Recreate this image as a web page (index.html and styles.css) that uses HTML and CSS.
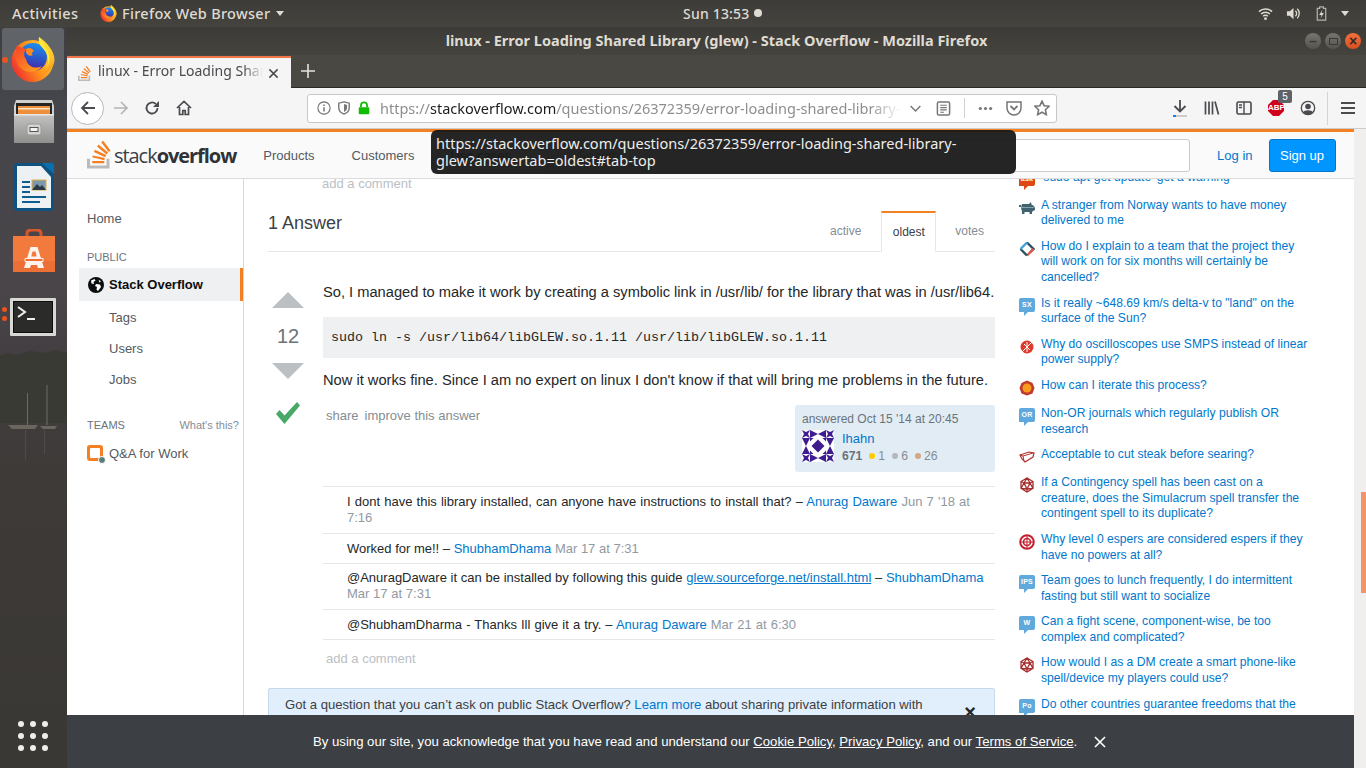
FILE: index.html
```html
<!DOCTYPE html>
<html lang="en">
<head>
<meta charset="utf-8">
<title>linux - Error Loading Shared Library (glew) - Stack Overflow</title>
<link rel="stylesheet" href="styles.css">
</head>
<body>
<svg class="defs" width="0" height="0" aria-hidden="true">
  <defs>
    <linearGradient id="ffBody" x1="0.95" y1="0.25" x2="0.05" y2="0.75">
      <stop offset="0" stop-color="#ffd22e"/><stop offset="0.5" stop-color="#ff8f1c"/><stop offset="1" stop-color="#f0302f"/>
    </linearGradient>
    <linearGradient id="ffGlobe" x1="0.6" y1="0" x2="0.45" y2="1">
      <stop offset="0" stop-color="#1b8ff0"/><stop offset="0.55" stop-color="#2b55c8"/><stop offset="1" stop-color="#4a1fa0"/>
    </linearGradient>
    <linearGradient id="ffTail" x1="0" y1="0" x2="0.8" y2="1">
      <stop offset="0" stop-color="#f5402c"/><stop offset="1" stop-color="#ff9d1c"/>
    </linearGradient>
    <linearGradient id="ffHorn" x1="0.4" y1="0" x2="0.5" y2="1">
      <stop offset="0" stop-color="#ffe838"/><stop offset="0.6" stop-color="#ffc02a"/><stop offset="1" stop-color="#ff8f1c"/>
    </linearGradient>
    <linearGradient id="metal" x1="0" y1="0" x2="0" y2="1">
      <stop offset="0" stop-color="#c4c4c2"/><stop offset="1" stop-color="#8f8f8d"/>
    </linearGradient>
    <symbol id="firefox" viewBox="0 0 44 45">
      <circle cx="21.500" cy="24" r="21" fill="url(#ffBody)"/>
      <circle cx="22" cy="20" r="14" fill="url(#ffGlobe)"/>
      <path d="M28 0c-1 7 3 10 7 14 5 5 6 14 1 19-3 3-8 5-12 5 8 0 19-4 19.500-15C43.500 13 35 5 28 0z" fill="url(#ffHorn)"/>
      <path d="M28 0c-1 7 3 10 6 14 4 6 4 13 0 18 4-3 5-9 4-14-1-6-6-12-10-18z" fill="#ffe838"/>
      <path d="M6 8c3 3 6 3 9 4-3 4-2 8 0 10 1 7 9 11 16 7-4 6-13 8-20 3C4 27 3 16 6 8z" fill="url(#ffTail)"/>
      <path d="M15 12c3-2 6-1 8 2-2 1-3 3-1 4-3 2-6 0-7-3z" fill="#ff8a1f"/>
    </symbol>
    <symbol id="so" viewBox="0 8 32 37">
      <path d="M26 41v-9h4v13H0V32h4v9h22z" fill="#bcbbbb"/>
      <path d="M23 34l.8-3-16.100-3.300L7 30.300 23 34zM9.200 23.200l15 7 1.400-3-15-7-1.400 3zm4.200-7.400L26 26.400l2.100-2.500-12.700-10.600-2 2.500zM21.500 8l-2.600 2 9.900 13.300 2.600-2L21.500 8zM7 38h16v-3H7v3z" fill="#f48024"/>
    </symbol>
    <symbol id="d20" viewBox="0 0 16 16">
      <path d="M8 1l6 3.500v7L8 15l-6-3.500v-7zM8 1L5 6h6zM5 6l-3 5.500M11 6l3 5.500M5 6l3 6 3-6M2 11.500L8 12l6-.5M8 12v3M2 4.500L5 6M14 4.500L11 6" fill="none" stroke="#a52a2a" stroke-width="1.300"/>
    </symbol>
    <g id="quilt">
      <path d="M0 0l4 2 4-2-2 4 2 4-4-2-4 2 2-4zM8 0l8 4-8 4zM0 8h8l-4 8zM16 9.500v6.500H9.500zM8 8h3.500L8 11.500z" fill="#3f1d8f"/>
    </g>
  </defs>
</svg>

<header class="topbar">
  <div class="topbar-left">
    <span class="activities">Activities</span>
    <svg class="top-ff"><use href="#firefox"/></svg>
    <span class="app-name">Firefox Web Browser</span>
    <span class="caret"></span>
  </div>
  <div class="clock">Sun 13:53<span class="clock-dot"></span></div>
  <div class="tray">
    <svg class="tray-icon" viewBox="0 0 16 16"><path d="M1 6a10 10 0 0 1 14 0M3.300 8.500a6.800 6.800 0 0 1 9.400 0M5.500 11a3.500 3.500 0 0 1 5 0" fill="none" stroke="#dfdbd2" stroke-width="1.500"/><circle cx="8" cy="13.500" r="1.500" fill="#dfdbd2"/></svg>
    <svg class="tray-icon" viewBox="0 0 16 16"><path d="M1 5.500h3L8 2v12L4 10.500H1z" fill="#dfdbd2"/><path d="M10 5a4 4 0 0 1 0 6M12 3a7 7 0 0 1 0 10" fill="none" stroke="#dfdbd2" stroke-width="1.400"/></svg>
    <svg class="tray-icon" viewBox="0 0 16 16"><path d="M6 1h4v1.500h2.500V15h-9V2.500H6z" fill="none" stroke="#b5b2ac" stroke-width="1.300"/><path d="M9 4L5.500 9.500H8L7 13l3.500-5.500H8z" fill="#dfdbd2"/></svg>
    <span class="caret caret-tray"></span>
  </div>
</header>

<div class="desk">
  <nav class="dock">
    <svg class="wallpaper" viewBox="0 0 67 741" preserveAspectRatio="none" aria-hidden="true">
      <path d="M0 329l8-3 10 2 12-4 14 2 12-3 11 3v70H0z" fill="#383a33"/>
      <path d="M27 366h1v32h-1zM46.500 358h1v40h-1z" fill="#6e6a64"/>
      <path d="M8 398h30l-3 4H12zM40 399h17l-2 3H43z" fill="#6a665f"/>
      <path d="M25 403h1v30h-1zM44 403h1v24h-1z" fill="#4f4c47"/>
    </svg>
    <div class="dock-active">
      <span class="run-dot run-ff"></span>
      <svg class="dock-ff"><use href="#firefox"/></svg>
    </div>
    <svg class="dock-files" viewBox="0 0 42 44">
      <path d="M3 0h36l2 6v37H1V6z" fill="#d0d0ce"/>
      <path d="M3 3h36v11H3z" fill="#262523"/>
      <path d="M5 6h32v8H5z" fill="#ee8f3b"/>
      <path d="M5 8h32v1.500H5z" fill="#f7e5c9"/>
      <path d="M1 14h40v29H1z" fill="url(#metal)"/>
      <path d="M1 14h40v1.500H1z" fill="#e8e8e6"/>
      <rect x="14" y="24" width="14" height="11" rx="2" fill="#d4d4d2" stroke="#999"/>
      <rect x="17" y="27.500" width="8" height="4" fill="#f4f4f2" stroke="#555"/>
    </svg>
    <svg class="dock-writer" viewBox="0 0 40 48">
      <rect x="0" y="0" width="40" height="48" rx="3" fill="#10527f"/>
      <path d="M3 3h24l10 11v31H3z" fill="#eef1f4"/>
      <path d="M28 0h10a2 2 0 0 1 2 2v9z" fill="#0a6fae"/>
      <path d="M8 18h8v2H8zM8 23h8v2H8zM8 28h8v2H8zM8 33h24v2H8zM8 38h18v2H8z" fill="#0f5c8f"/>
      <rect x="18" y="17" width="14" height="10" fill="#7d97ad" stroke="#e0b04a"/>
      <path d="M18 27l5-6 3 3 2-2 4 5z" fill="#2c3a44"/>
    </svg>
    <svg class="dock-bag" viewBox="0 0 42 43">
      <path d="M14 9V5q0-4 4-4h6q4 0 4 4v4" fill="none" stroke="#d8572a" stroke-width="3"/>
      <path d="M0 7h42v36H0z" fill="#f27a3c"/>
      <path d="M0 32h42v11H0z" fill="#ec7036"/>
      <path d="M17.500 18h7l6.500 21h-6l-1-3h-6l-1 3h-6z" fill="#fdf3ec"/>
      <path d="M12 29.500h18v3H12z" fill="#ed6d33" stroke="#fdf3ec"/>
      <path d="M19.500 22.500h3l1.200 5h-5.400z" fill="#f27a3c"/>
    </svg>
    <div class="dock-term-row">
      <span class="term-dots"><span class="run-dot"></span><span class="run-dot"></span></span>
      <svg class="dock-term" viewBox="0 0 46 38">
        <rect width="46" height="38" rx="1" fill="#d8d8d5"/>
        <rect x="3.500" y="3.500" width="39" height="31" fill="#2b2b2a" stroke="#0e0e0e"/>
        <path d="M8 9l7 5-7 5" fill="none" stroke="#f0f0ee" stroke-width="2"/>
        <path d="M17 20h8v2h-8z" fill="#f0f0ee"/>
      </svg>
    </div>
    <div class="apps-grid">
      <span></span><span></span><span></span><span></span><span></span><span></span><span></span><span></span><span></span>
    </div>
  </nav>

  <div class="window">
    <div class="titlebar">
      <div class="title">linux - Error Loading Shared Library (glew) - Stack Overflow - Mozilla Firefox</div>
      <div class="win-controls">
        <span class="win-btn">–</span>
        <span class="win-btn"><span class="win-max"></span></span>
        <span class="win-btn win-close">×</span>
      </div>
    </div>
    <div class="tabstrip">
      <div class="tab">
        <svg class="tab-fav"><use href="#so"/></svg>
        <span class="tab-title">linux - Error Loading Shar</span>
        <svg class="tab-x" viewBox="0 0 12 12"><path d="M1.500 1.500l9 9M10.500 1.500l-9 9" stroke="#4a4a4f" stroke-width="1.600"/></svg>
      </div>
      <svg class="newtab" viewBox="0 0 14 14"><path d="M7 0v14M0 7h14" stroke="#e4e2de" stroke-width="1.600"/></svg>
    </div>
    <div class="toolbar">
      <span class="back-btn">
        <svg viewBox="0 0 16 16"><path d="M15 8H2M8 2L2 8l6 6" fill="none" stroke="#4a4a4f" stroke-width="1.800"/></svg>
      </span>
      <svg class="tool-icon fwd" viewBox="0 0 16 16"><path d="M1 8h13M8 2l6 6-6 6" fill="none" stroke="#b3b3b3" stroke-width="1.600"/></svg>
      <svg class="tool-icon reload" viewBox="0 0 16 16"><path d="M13.500 8a5.500 5.500 0 1 1-1.700-4" fill="none" stroke="#4a4a4f" stroke-width="1.800"/><path d="M15 1v6H9z" fill="#4a4a4f"/></svg>
      <svg class="tool-icon home" viewBox="0 0 16 16"><path d="M1 8l7-6.500L15 8M3.500 7v7.500h3.300v-4h2.400v4h3.300V7" fill="none" stroke="#4a4a4f" stroke-width="1.700"/></svg>
      <div class="urlbar">
        <svg class="url-icon" viewBox="0 0 16 16"><circle cx="8" cy="8" r="7" fill="none" stroke="#6b6b6e" stroke-width="1.200"/><path d="M7.200 7h1.600v5H7.200zM7.200 4h1.600v1.600H7.200z" fill="#6b6b6e"/></svg>
        <svg class="url-icon" viewBox="0 0 16 16"><path d="M8 1l6 1.500v5c0 4-3 6.500-6 7.500-3-1-6-3.500-6-7.500v-5z" fill="none" stroke="#77777a" stroke-width="1.600"/><path d="M8 3.500l3.500 1v3.500c0 2-1.500 3.600-3.500 4.500z" fill="#77777a"/></svg>
        <svg class="url-icon" viewBox="0 0 16 16"><path d="M4.500 7V5a3.500 3.500 0 0 1 7 0v2" fill="none" stroke="#12bc00" stroke-width="2"/><rect x="2" y="7" width="12" height="8" rx="1" fill="#12bc00"/></svg>
        <div class="url-text"><span class="url-dim">https://</span>stackoverflow.com<span class="url-dim">/questions/26372359/error-loading-shared-library-</span></div>
        <svg class="url-end chev" viewBox="0 0 16 16"><path d="M2 5l6 6 6-6" fill="none" stroke="#77777a" stroke-width="1.800"/></svg>
        <svg class="url-end reader" viewBox="0 0 16 16"><rect x="1.500" y="1" width="13" height="14" rx="1.500" fill="none" stroke="#77777a" stroke-width="1.600"/><path d="M4.500 4.500h7M4.500 7h7M4.500 9.500h7M4.500 12h4" stroke="#77777a" stroke-width="1.200"/></svg>
        <span class="url-sep"></span>
        <svg class="url-end more" viewBox="0 0 16 16"><circle cx="2.500" cy="8" r="1.700" fill="#77777a"/><circle cx="8" cy="8" r="1.700" fill="#77777a"/><circle cx="13.500" cy="8" r="1.700" fill="#77777a"/></svg>
        <svg class="url-end pocket" viewBox="0 0 16 16"><path d="M1 2h14v6a7 7 0 0 1-14 0z" fill="none" stroke="#77777a" stroke-width="1.500"/><path d="M4.500 6L8 9.500 11.500 6" fill="none" stroke="#77777a" stroke-width="1.800"/></svg>
        <svg class="url-end star" viewBox="0 0 16 16"><path d="M8 1.200l2.100 4.500 4.900.6-3.600 3.400.9 4.900L8 12.200l-4.300 2.400.9-4.900L1 6.300l4.900-.6z" fill="none" stroke="#77777a" stroke-width="1.600"/></svg>
      </div>
      <svg class="tool-icon dl" viewBox="0 0 16 18"><path d="M8 1v11M2.500 7L8 12.500 13.500 7" fill="none" stroke="#4a4a4f" stroke-width="1.800"/><path d="M1 16h14v2H1z" fill="#ccc"/><path d="M1 16h3v2H1z" fill="#0a84ff"/></svg>
      <svg class="tool-icon lib" viewBox="0 0 16 16"><path d="M1.500 1.500v13M5 1.500v13M8.500 1.500v13M11 1.500l3.500 13" fill="none" stroke="#4a4a4f" stroke-width="1.700"/></svg>
      <svg class="tool-icon side" viewBox="0 0 16 16"><rect x="1" y="2" width="14" height="12" rx="1.500" fill="none" stroke="#4a4a4f" stroke-width="1.600"/><path d="M8 2v12M3 5h3M3 7.500h3" stroke="#4a4a4f" stroke-width="1.400"/></svg>
      <span class="abp">
        <svg viewBox="0 0 16 16"><path d="M5 0h6l5 5v6l-5 5H5l-5-5V5z" fill="#d0021b"/></svg>
        <span class="abp-text">ABP</span>
        <span class="abp-badge">5</span>
      </span>
      <svg class="tool-icon acct" viewBox="0 0 16 16"><circle cx="8" cy="8" r="6.700" fill="none" stroke="#4a4a4f" stroke-width="1.300"/><circle cx="8" cy="6.500" r="2.800" fill="#4a4a4f"/><path d="M3 12.500c1-3 9-3 10 0a6.500 6.500 0 0 1-10 0z" fill="#4a4a4f"/></svg>
      <span class="tool-sep"></span>
      <svg class="tool-icon burger" viewBox="0 0 16 16"><path d="M1 3h14M1 8h14M1 13h14" stroke="#4a4a4f" stroke-width="2"/></svg>
    </div>

    <div class="viewport">
      <div class="page">
        <div class="so-header">
          <a class="so-logo"><svg class="so-mark"><use href="#so"/></svg><span class="so-word">stack<b>overflow</b></span></a>
          <span class="so-link so-products">Products</span>
          <span class="so-link so-customers">Customers</span>
          <span class="so-link so-usecases">Use cases</span>
          <div class="so-search">Search…</div>
          <span class="so-login">Log in</span>
          <span class="so-signup">Sign up</span>
        </div>
        <div class="so-body">
          <aside class="left-nav">
            <div class="nav-home">Home</div>
            <div class="nav-head">PUBLIC</div>
            <div class="nav-current">
              <svg class="globe" viewBox="0 0 16 16"><circle cx="8" cy="8" r="8" fill="#0c0d0e"/><path d="M3 3.500l3.500-1.500 1 1.500-2 1.500.5 2-2.500-.5zM8 7l4 .5 1 2.500-3 4-1.500-1.500.5-2.500-2-1zM10.500 2.500l2.500 2-1.500 1z" fill="#fff"/></svg>
              <span>Stack Overflow</span>
            </div>
            <div class="nav-sub nav-sub-first">Tags</div>
            <div class="nav-sub">Users</div>
            <div class="nav-sub">Jobs</div>
            <div class="nav-teams"><span>TEAMS</span><span class="whats">What's this?</span></div>
            <div class="nav-qa">
              <span class="qa-icon"><span class="qa-case"></span><span class="qa-badge"></span></span>
              <span>Q&amp;A for Work</span>
            </div>
          </aside>

          <main class="main">
            <div class="add-top">add a comment</div>
            <div class="answers-head">
              <h2>1 Answer</h2>
              <div class="sort-tabs">
                <span class="sort-tab">active</span>
                <span class="sort-tab sort-on">oldest</span>
                <span class="sort-tab">votes</span>
              </div>
            </div>
            <div class="post">
              <div class="votes">
                <span class="arrow-up"></span>
                <span class="score">12</span>
                <span class="arrow-down"></span>
                <svg class="accepted" viewBox="0 0 26 24"><path d="M1 13l3.500-4 5 5.500L22 1l3 3.500L9.500 23z" fill="#48a868"/></svg>
              </div>
              <div class="post-body">
                <p class="post-text">So, I managed to make it work by creating a symbolic link in /usr/lib/ for the library that was in /usr/lib64.</p>
                <pre class="code">sudo ln -s /usr/lib64/libGLEW.so.1.11 /usr/lib/libGLEW.so.1.11</pre>
                <p class="post-text post-text-2">Now it works fine. Since I am no expert on linux I don't know if that will bring me problems in the future.</p>
                <div class="post-foot">
                  <div class="post-menu"><span>share</span><span>improve this answer</span></div>
                  <div class="signature">
                    <div class="sig-time">answered Oct 15 '14 at 20:45</div>
                    <div class="sig-user">
                      <svg class="avatar" viewBox="0 0 32 32">
                        <rect width="32" height="32" fill="#fff"/>
                        <use href="#quilt"/>
                        <use href="#quilt" transform="matrix(-1 0 0 1 32 0)"/>
                        <use href="#quilt" transform="matrix(1 0 0 -1 0 32)"/>
                        <use href="#quilt" transform="matrix(-1 0 0 -1 32 32)"/>
                      </svg>
                      <div class="sig-info">
                        <div class="sig-name">Ihahn</div>
                        <div class="sig-rep"><b>671</b><span class="bdg bdg-gold"></span>1<span class="bdg bdg-silver"></span>6<span class="bdg bdg-bronze"></span>26</div>
                      </div>
                    </div>
                  </div>
                </div>
                <div class="comments">
                  <div class="comment comment-tall">I dont have this library installed, can anyone have instructions to install that? – <a>Anurag Daware</a> <span class="c-date">Jun 7 '18 at 7:16</span></div>
                  <div class="comment">Worked for me!! – <a>ShubhamDhama</a> <span class="c-date">Mar 17 at 7:31</span></div>
                  <div class="comment comment-double">@AnuragDaware it can be installed by following this guide <a class="c-ul">glew.sourceforge.net/install.html</a> – <a>ShubhamDhama</a> <span class="c-date">Mar 17 at 7:31</span></div>
                  <div class="comment comment-last">@ShubhamDharma - Thanks Ill give it a try. – <a>Anurag Daware</a> <span class="c-date">Mar 21 at 6:30</span></div>
                </div>
                <div class="add-bottom">add a comment</div>
              </div>
            </div>
            <div class="notice">
              Got a question that you can’t ask on public Stack Overflow? <a>Learn more</a> about sharing private information with
              <span class="notice-x">×</span>
            </div>
          </main>

          <aside class="hot">
            <div class="hot-item"><span class="site s-bubble s-orange">ask</span><a>'sudo apt-get update' get a warning</a></div>
            <div class="hot-item"><svg class="site" viewBox="0 0 16 16"><path d="M0 5h2v2H0zM3 4h7l2-2 .5 2.500L15 6l1 2v2l-2 1-1 1v2h-2.500v-2h-5v2H3v-2.500L2 8z" fill="#41626f"/><path d="M2 7.500h13" stroke="#8aa3ad" stroke-width="1"/></svg><a>A stranger from Norway wants to have money delivered to me</a></div>
            <div class="hot-item"><svg class="site" viewBox="0 0 16 16"><path d="M8 1.500L14.500 8 11 11.500" fill="none" stroke="#2f4f63" stroke-width="2.400"/><path d="M14.500 8L8 14.500" fill="none" stroke="#e05a4c" stroke-width="2.400"/><path d="M8 14.500L1.500 8" fill="none" stroke="#2f4f63" stroke-width="2.400"/><path d="M1.500 8L8 1.500" fill="none" stroke="#3ea3dc" stroke-width="2.400"/></svg><a>How do I explain to a team that the project they will work on for six months will certainly be cancelled?</a></div>
            <div class="hot-item"><span class="site s-bubble">SX</span><a>Is it really ~648.69 km/s delta-v to "land" on the surface of the Sun?</a></div>
            <div class="hot-item"><svg class="site" viewBox="0 0 16 16"><circle cx="8" cy="8" r="6.500" fill="#dd3a2c"/><path d="M3 13L13 3M5 5l6 6M8 3v10" stroke="#fff" stroke-width="1"/></svg><a>Why do oscilloscopes use SMPS instead of linear power supply?</a></div>
            <div class="hot-item"><svg class="site" viewBox="0 0 16 16"><path d="M8 .5l5.500 2.500L15.500 8l-2 5.500L8 15.500 2.500 13.500.5 8l2-5z" fill="#c0392b"/><circle cx="8" cy="8" r="4.500" fill="#f79a1e"/></svg><a>How can I iterate this process?</a></div>
            <div class="hot-item"><span class="site s-bubble">OR</span><a>Non-OR journals which regularly publish OR research</a></div>
            <div class="hot-item"><svg class="site" viewBox="0 0 16 16"><path d="M1 6l9-3 5 1-1 4-8 5-3-3z" fill="#fff" stroke="#b3322d" stroke-width="1.200"/><path d="M1 6l3 1 1 5M4 7l10-3" fill="none" stroke="#b3322d"/></svg><a>Acceptable to cut steak before searing?</a></div>
            <div class="hot-item"><svg class="site"><use href="#d20"/></svg><a>If a Contingency spell has been cast on a creature, does the Simulacrum spell transfer the contingent spell to its duplicate?</a></div>
            <div class="hot-item"><svg class="site" viewBox="0 0 16 16"><circle cx="8" cy="8" r="6.800" fill="none" stroke="#c4202f" stroke-width="2"/><circle cx="8" cy="8" r="3.500" fill="none" stroke="#c4202f" stroke-width="1.600"/><path d="M1 8h14M8 1v14" stroke="#c4202f"/></svg><a>Why level 0 espers are considered espers if they have no powers at all?</a></div>
            <div class="hot-item"><span class="site s-bubble">IPS</span><a>Team goes to lunch frequently, I do intermittent fasting but still want to socialize</a></div>
            <div class="hot-item"><span class="site s-bubble">W</span><a>Can a fight scene, component-wise, be too complex and complicated?</a></div>
            <div class="hot-item"><svg class="site"><use href="#d20"/></svg><a>How would I as a DM create a smart phone-like spell/device my players could use?</a></div>
            <div class="hot-item"><span class="site s-bubble">Po</span><a>Do other countries guarantee freedoms that the</a></div>
          </aside>
        </div>
        <div class="cookie">
          <span>By using our site, you acknowledge that you have read and understand our <u>Cookie Policy</u>, <u>Privacy Policy</u>, and our <u>Terms of Service</u>.</span>
          <svg class="cookie-x" viewBox="0 0 12 12"><path d="M1 1l10 10M11 1L1 11" stroke="#fff" stroke-width="1.600"/></svg>
        </div>
      </div>
      <div class="scrollbar"><span class="thumb"></span></div>
      <div class="tooltip">https://stackoverflow.com/questions/26372359/error-loading-shared-library-<br>glew?answertab=oldest#tab-top</div>
    </div>
  </div>
</div>
</body>
</html>
```
FILE: styles.css
```css
* { box-sizing: border-box; }
html, body { margin: 0; padding: 0; }
body {
  width: 1366px;
  height: 768px;
  overflow: hidden;
  display: flex;
  flex-direction: column;
  font-family: "Liberation Sans", Arial, sans-serif;
  background: #3a3936;
}
a { color: #0077cc; text-decoration: none; }
svg { display: block; }
.defs { position: absolute; }

/* GNOME top bar */
.topbar {
  height: 27px;
  flex: none;
  display: flex;
  align-items: center;
  position: relative;
  background: linear-gradient(#3d3c38, #45433e);
  color: #dfdbd2;
  font-family: "Noto Sans", sans-serif;
  font-size: 14.500px;
  font-weight: 500;
  padding-bottom: 1px;
}
.topbar-left { display: flex; align-items: center; padding-left: 12px; }
.activities { width: 88px; letter-spacing: 0.4px; }
.top-ff { width: 17px; height: 17px; margin-right: 5px; }
.app-name { letter-spacing: 0.3px; }
.caret {
  width: 0; height: 0; margin-left: 6px;
  border-left: 4.500px solid transparent; border-right: 4.500px solid transparent;
  border-top: 5px solid #dfdbd2;
}
.clock {
  position: absolute; left: 683px; top: 0; height: 26px;
  display: flex; align-items: center; font-size: 14px; letter-spacing: 0.2px;
}
.clock-dot { width: 8px; height: 8px; border-radius: 50%; background: #dfdbd2; margin-left: 4px; }
.tray { margin-left: auto; display: flex; align-items: center; padding-right: 17px; gap: 13px; }
.tray-icon { width: 15px; height: 15px; }
.caret-tray { margin-left: -1px; }

/* Desk */
.desk { flex: 1; display: flex; min-height: 0; }

/* Dock */
.dock {
  width: 67px; flex: none; position: relative; overflow: hidden;
  display: flex; flex-direction: column; align-items: center;
  background: linear-gradient(#3f3f42 0, #45464b 10%, #4a4549 36%, #443f42 43%, #3d3a38 60%, #3a3835 100%);
}
.wallpaper { position: absolute; left: 0; top: 0; width: 67px; height: 741px; }
.dock-active {
  position: relative; width: 62px; height: 62px; margin-top: 1px; align-self: flex-start; margin-left: 2px;
  background: #606368; border-radius: 3px;
  display: flex; align-items: center; justify-content: center;
}
.dock-ff { width: 44px; height: 45px; }
.run-dot { display: block; width: 5px; height: 5px; border-radius: 50%; background: #e95420; }
.run-ff { position: absolute; left: 0; top: 29px; width: 6px; height: 6px; }
.dock-files { position: relative; width: 42px; height: 44px; margin-top: 10px; }
.dock-writer { position: relative; width: 40px; height: 48px; margin-top: 19px; }
.dock-bag { position: relative; width: 42px; height: 43px; margin-top: 18px; }
.dock-term-row {
  position: relative; width: 67px; height: 38px; margin-top: 26px;
  display: flex; align-items: center;
}
.term-dots { position: absolute; left: 2px; top: 9px; display: flex; flex-direction: column; gap: 4px; }
.dock-term { width: 46px; height: 38px; margin-left: 10px; }
.apps-grid {
  position: absolute; left: 18px; bottom: 17px;
  display: grid; grid-template-columns: repeat(3, 6px); gap: 6px;
}
.apps-grid span { width: 6px; height: 6px; border-radius: 50%; background: #eeeeec; }

/* Window */
.window { flex: 1; min-width: 0; display: flex; flex-direction: column; }
.titlebar {
  height: 28px; flex: none; position: relative;
  display: flex; align-items: center; justify-content: center;
  background: linear-gradient(#3c3b37, #45433e);
}
.title {
  font-family: "Noto Sans", sans-serif; font-weight: 700; font-size: 14.500px;
  color: #dfdbd2; margin-bottom: 2px;
}
.win-controls { position: absolute; right: 5px; top: 6px; display: flex; gap: 4px; }
.win-btn {
  width: 16px; height: 16px; border-radius: 50%;
  background: linear-gradient(#77756f, #55534e);
  color: #3a3936; font-size: 14px; line-height: 15px; text-align: center; font-weight: 700;
  display: flex; align-items: center; justify-content: center;
}
.win-max { width: 9px; height: 7px; border: 1.500px solid #3a3936; }
.win-close { background: linear-gradient(#f0703d, #d8501f); color: #3a2a20; }
.tabstrip {
  height: 33px; flex: none; display: flex; align-items: flex-end;
  background: #4a4843; border-bottom: 1px solid #2a2926;
}
.tab {
  width: 224px; height: 32px; margin-bottom: -1px;
  background: #f5f5f5; border-top: 2px solid #f0764a;
  display: flex; align-items: center; padding-left: 11px;
}
.tab-fav { width: 13px; height: 15px; flex: none; }
.tab-title {
  font-family: "Noto Sans", sans-serif; font-size: 14px; color: #4a4a4f; line-height: 20px;
  margin: -4px 0 0 7px; width: 165px; flex: none; white-space: nowrap; overflow: hidden;
  -webkit-mask-image: linear-gradient(90deg, #000 88%, transparent);
  mask-image: linear-gradient(90deg, #000 88%, transparent);
}
.tab-x { width: 11px; height: 11px; margin-left: 5px; }
.newtab { width: 14px; height: 14px; margin: 0 0 9px 10px; }

.toolbar {
  height: 41px; flex: none; display: flex; align-items: center;
  background: #f5f5f5; border-bottom: 1px solid #cccccc;
  padding-left: 4px;
}
.back-btn {
  width: 33px; height: 33px; border-radius: 50%;
  background: #fff; border: 1px solid #b8b8b8;
  display: flex; align-items: center; justify-content: center;
}
.back-btn svg { width: 16px; height: 16px; }
.tool-icon { width: 16px; height: 16px; flex: none; }
.fwd { margin-left: 9px; }
.reload { margin-left: 15px; }
.home { margin-left: 16px; }
.urlbar {
  width: 750px; height: 29px; margin-left: 115px; flex: none;
  background: #fff; border: 1px solid #c8c8c8; border-radius: 3px;
  display: flex; align-items: center; padding-left: 9px; position: relative;
}
.url-icon { width: 14px; height: 14px; flex: none; margin-right: 6px; }
.url-text {
  font-family: "Noto Sans", sans-serif; font-size: 14.500px; color: #1c1c1c;
  margin-left: 3px; width: 521px; flex: none; white-space: nowrap; overflow: hidden;
  -webkit-mask-image: linear-gradient(90deg, #000 94%, transparent);
  mask-image: linear-gradient(90deg, #000 94%, transparent);
}
.url-dim { color: #8e8e90; }
.url-end { flex: none; }
.chev { width: 13px; height: 13px; margin-left: 8px; }
.reader { width: 15px; height: 15px; margin-left: 14px; }
.url-sep { width: 1px; height: 20px; background: #d0d0d0; margin-left: 13px; }
.more { width: 15px; height: 15px; margin-left: 13px; }
.pocket { width: 16px; height: 16px; margin-left: 13px; }
.star { width: 16px; height: 16px; margin-left: 12px; }
.dl { height: 18px; margin-left: 115px; }
.lib { margin-left: 16px; }
.side { margin-left: 16px; }
.abp { position: relative; width: 16px; height: 16px; margin-left: 16px; flex: none; }
.abp svg { width: 16px; height: 16px; }
.abp-text {
  position: absolute; left: 0; top: 3px; width: 16px; text-align: center;
  font-size: 8px; font-weight: 700; color: #fff; line-height: 10px;
}
.abp-badge {
  position: absolute; left: 10px; top: -10px; width: 14px; height: 13px;
  background: #5f6368; border-radius: 2px; color: #fff;
  font-size: 10px; line-height: 13px; text-align: center;
}
.acct { margin-left: 16px; }
.tool-sep { width: 1px; height: 33px; background: #d4d4d4; margin-left: 11px; flex: none; }
.burger { margin-left: 12px; }

/* Viewport */
.viewport { flex: 1; min-height: 0; display: flex; position: relative; }
.page { flex: 1; min-width: 0; position: relative; overflow: hidden; background: #fff; display: flex; flex-direction: column; }
.scrollbar { width: 12px; flex: none; background: #f1efed; position: relative; }
.thumb { position: absolute; right: 0; top: 363px; width: 5px; height: 101px; background: #f3936b; }

/* SO header */
.so-header {
  height: 50px; flex: none; position: relative; z-index: 2;
  background: #fafafb; border-top: 3px solid #f48024; border-bottom: 1px solid #dcdcdc;
  display: flex; align-items: center;
  font-size: 13px;
}
.so-logo { display: flex; align-items: center; margin-left: 20px; }
.so-mark { width: 24px; height: 29px; margin-top: -1px; }
.so-word {
  font-family: "Open Sans", sans-serif; font-size: 20px; letter-spacing: -1.050px; color: #3b4045;
  margin-left: 3px; margin-top: 1px;
}
.so-word b { font-weight: 700; color: #2f3337; }
.so-link { color: #535a60; }
.so-products { margin-left: 27px; }
.so-customers { margin-left: 37px; }
.so-usecases { margin-left: 36px; }
.so-search {
  margin-left: 36px; width: 643px; height: 33px;
  background: #fff; border: 1px solid #c8ccd0; border-radius: 3px;
  color: #9fa6ad; padding: 8px 30px;
}
.so-login { color: #0077cc; margin-left: 27px; }
.so-signup {
  margin-left: 16px; width: 67px; height: 33px; line-height: 31px; text-align: center;
  background: #0095ff; color: #fff; border: 1px solid #07c; border-radius: 3px;
}

.so-body { flex: 1; min-height: 0; display: flex; }

/* Left nav */
.left-nav {
  width: 177px; flex: none; border-right: 1px solid #d6d9dc;
  padding-left: 12px; font-size: 13px; color: #535a60;
}
.nav-home { margin-top: 32px; height: 16px; line-height: 16px; padding-left: 8px; }
.nav-head { margin-top: 23px; height: 14px; line-height: 14px; padding-left: 8px; font-size: 11px; color: #6a737c; }
.nav-current {
  margin-top: 4px; height: 33px; display: flex; align-items: center; padding-left: 9px; gap: 5px;
  background: #eff0f1; border-right: 3px solid #f48024;
  font-weight: 700; color: #0c0d0e;
}
.globe { width: 16px; height: 16px; }
.nav-sub { height: 31px; line-height: 31px; padding-left: 30px; }
.nav-sub-first { margin-top: 1px; }
.nav-teams {
  margin-top: 23px; height: 14px; line-height: 14px; padding: 0 4px 0 8px;
  display: flex; justify-content: space-between; font-size: 11px; color: #6a737c;
}
.whats { color: #848d95; }
.nav-qa { margin-top: 13px; display: flex; align-items: center; gap: 6px; padding-left: 8px; height: 16px; }
.qa-icon { width: 16px; height: 16px; position: relative; flex: none; background: #f48024; border-radius: 3px; display: block; }
.qa-case { position: absolute; left: 3px; top: 3px; width: 10px; height: 10px; background: #fff; border-radius: 1px; }
.qa-badge { position: absolute; right: -3px; bottom: -3px; width: 8px; height: 8px; background: #5d7a77; border: 1px solid #fff; border-radius: 50%; }

/* Main */
.main { width: 751px; flex: none; padding-left: 24px; font-size: 13px; }
.add-top { margin: -3px 0 19px 54px; height: 16px; line-height: 16px; color: #bbc0c4; }
.answers-head {
  height: 41px; border-bottom: 1px solid #e4e6e8;
  display: flex; justify-content: space-between; align-items: flex-start;
}
.answers-head h2 { margin: 0; padding-top: 1px; font-size: 18px; font-weight: 400; line-height: 23px; color: #3b4045; }
.sort-tabs { display: flex; height: 41px; }
.sort-tab { color: #848d95; font-size: 12px; height: 41px; padding: 13px 9px 0; line-height: 15px; }
.sort-tab:first-child { margin-right: 11px; }
.sort-tab:last-child { margin-left: 10px; margin-right: 2px; }
.sort-on {
  color: #3b4045; background: #fff; border: 1px solid #e4e6e8; border-top: 2px solid #f48024; border-bottom: 1px solid #fff;
  width: 55px; text-align: center; padding: 12px 0 0;
}
.post { display: flex; }
.votes { width: 55px; flex: none; display: flex; flex-direction: column; align-items: flex-start; padding: 40px 0 0 4px; }
.arrow-up, .arrow-down { width: 0; height: 0; border-left: 16px solid transparent; border-right: 16px solid transparent; }
.arrow-up { border-bottom: 16px solid #bbc0c4; }
.arrow-down { border-top: 16px solid #bbc0c4; }
.score { width: 32px; text-align: center; font-size: 20px; line-height: 26px; color: #6a737c; margin: 15px 0 14px; }
.accepted { width: 26px; height: 24px; margin: 22px 0 0 3px; }
.post-body { flex: 1; min-width: 0; padding-top: 30px; }
.post-text { margin: 0; font-size: 14.670px; line-height: 20px; color: #242729; white-space: nowrap; }
.code {
  margin: 15px 0 12px; height: 41px; padding: 12px 8px; line-height: 17px;
  background: #eff0f1; color: #242729;
  font-family: "Liberation Mono", monospace; font-size: 13.333px;
}
.post-foot { margin-top: 15px; display: flex; justify-content: space-between; align-items: flex-start; }
.post-menu { display: flex; gap: 6px; padding: 3px 0 0 3px; color: #848d95; line-height: 16px; }
.signature { width: 200px; height: 67px; background: #e1ecf4; border-radius: 3px; padding: 7px; }
.sig-time { font-size: 12px; line-height: 14px; color: #6a737c; }
.sig-user { display: flex; margin-top: 4px; }
.avatar { width: 32px; height: 32px; }
.sig-info { margin-left: 8px; padding-top: 1px; }
.sig-name { color: #0077cc; font-size: 13px; line-height: 16px; }
.sig-rep { font-size: 12.200px; line-height: 16px; color: #848d95; margin-top: 1px; display: flex; align-items: center; }
.sig-rep b { color: #6a737c; }
.bdg { width: 6px; height: 6px; border-radius: 50%; margin: 0 3px 0 7px; }
.bdg-gold { background: #ffcc01; }
.bdg-silver { background: #b4b8bc; }
.bdg-bronze { background: #d1a684; }
.comments { margin-top: 14px; border-top: 1px solid #e4e6e8; }
.comment { padding: 7px 0 6px 24px; border-bottom: 1px solid #e4e6e8; line-height: 16px; color: #242729; }
.comment-tall { padding-bottom: 7px; word-spacing: 0.550px; }
.comment-double { padding: 6px 0 7px 24px; word-spacing: 0.100px; }
.comment-last { word-spacing: 0.450px; }
.c-date { color: #9199a1; }
.c-ul { text-decoration: underline; }
.add-bottom { margin: 11px 0 0 3px; height: 16px; line-height: 16px; color: #bbc0c4; }
.notice {
  margin-top: 21px; height: 70px; padding: 8px 16px; position: relative;
  background: #e1eefb; border: 1px solid #c5d9ea; border-radius: 2px;
  color: #3b4045; line-height: 16px; font-size: 13.100px;
}
.notice-x { position: absolute; right: 18px; top: 13px; font-size: 20px; line-height: 20px; font-weight: 700; color: #242729; }

/* Hot network */
.hot { flex: 1; min-width: 0; padding-left: 24px; margin-top: -9.400px; font-size: 12.130px; line-height: 15.600px; }
.hot-item { display: flex; gap: 6px; width: 292px; margin-bottom: 10px; }
.hot-item a { flex: 1; }
.site { width: 16px; height: 16px; flex: none; margin-top: 2px; }
.s-bubble {
  position: relative; display: block; background: #5fa9dc; color: #fff; border-radius: 2px 2px 2px 0;
  font-size: 7px; font-weight: 700; line-height: 14px; height: 14px; margin-bottom: 2px; text-align: center; letter-spacing: 0.3px;
}
.s-bubble::after {
  content: ""; position: absolute; left: 5px; top: 14px; width: 0; height: 0;
  border-left: 4px solid #5fa9dc; border-right: 0 solid transparent; border-bottom: 4px solid transparent;
}
.s-orange { background: #dd4814; }
.s-orange::after { border-left-color: #dd4814; }

/* Cookie bar */
.cookie {
  position: absolute; left: 0; right: 0; bottom: 0; height: 53px; z-index: 3;
  background: #3c4044; color: #fff; font-size: 13.170px;
  display: flex; align-items: center; padding-left: 246px;
}
.cookie-x { width: 12px; height: 12px; margin-left: 17px; }

/* Tooltip */
.tooltip {
  position: absolute; left: 364px; top: 1px; z-index: 5; width: 585px; height: 44px;
  background: rgba(20, 20, 20, 0.93); border-radius: 6px;
  color: #eeeeec; font-family: "Noto Sans", sans-serif; font-size: 14.500px; line-height: 17px; padding: 5px;
}
```
